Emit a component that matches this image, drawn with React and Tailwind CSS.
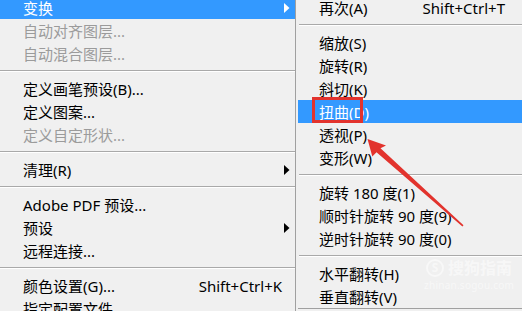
import React from "react";

const font = { fontFamily: '"Noto Sans", "Noto Sans CJK SC", sans-serif' };

function Arrow({ white }) {
  return (
    <svg width="6" height="10" viewBox="0 0 6 10" className="absolute right-[5px] top-1/2 -translate-y-1/2">
      <polygon points="0,0 5.5,5 0,10" fill={white ? "#ffffff" : "#000000"} />
    </svg>
  );
}

function Item({ label, shortcut, sub, disabled, active, pl = "pl-[23px]", pr = "pr-[13px]" }) {
  const color = active ? "bg-[#3399ff] text-white" : disabled ? "text-[#9b9b9b]" : "text-black";
  return (
    <div className={`relative h-[23px] flex items-center justify-between pt-px ${pl} ${pr} ${color}`}>
      <span className="whitespace-nowrap">{label}</span>
      {shortcut && <span className="whitespace-nowrap">{shortcut}</span>}
      {sub && <Arrow white={active} />}
    </div>
  );
}

function Sep({ ml = "ml-0" }) {
  return (
    <div className={`h-[12px] flex items-center ${ml}`}>
      <div className="w-full border-t border-[#a9a9a9] border-b border-b-white" />
    </div>
  );
}

export default function App() {
  return (
    <div className="relative w-[522px] h-[311px] overflow-hidden bg-[#f0f0f0] text-[15px] leading-none" style={font}>
      <div className="flex h-full">
        {/* main menu */}
        <div className="w-[295px] shrink-0 -mt-[4px]">
          <Item label="变换" sub active />
          <Item label="自动对齐图层..." disabled />
          <Item label="自动混合图层..." disabled />
          <Sep />
          <Item label="定义画笔预设(B)..." />
          <Item label="定义图案..." />
          <Item label="定义自定形状..." disabled />
          <Sep />
          <Item label="清理(R)" sub />
          <Sep />
          <Item label="Adobe PDF 预设..." />
          <Item label="预设" sub />
          <Item label="远程连接..." />
          <Sep />
          <Item label="颜色设置(G)..." shortcut="Shift+Ctrl+K" />
          <Item label="指定配置文件..." />
        </div>

        {/* transform submenu */}
        <div className="flex-1 border-l border-[#a0a0a0] pl-[2px] -mt-[4px]">
          <div className="h-[313px] border-b border-[#a0a0a0]">
            <Item label="再次(A)" shortcut="Shift+Ctrl+T" pl="pl-[21px]" pr="pr-[17px]" />
            <Sep ml="ml-px" />
            <Item label="缩放(S)" pl="pl-[21px]" />
            <Item label="旋转(R)" pl="pl-[21px]" />
            <Item label="斜切(K)" pl="pl-[21px]" />
            <Item label="扭曲(D)" active pl="pl-[21px]" />
            <Item label="透视(P)" pl="pl-[21px]" />
            <Item label="变形(W)" pl="pl-[21px]" />
            <Sep ml="ml-px" />
            <Item label="旋转 180 度(1)" pl="pl-[21px]" />
            <Item label="顺时针旋转 90 度(9)" pl="pl-[21px]" />
            <Item label="逆时针旋转 90 度(0)" pl="pl-[21px]" />
            <Sep ml="ml-px" />
            <Item label="水平翻转(H)" pl="pl-[21px]" />
            <Item label="垂直翻转(V)" pl="pl-[21px]" />
          </div>
        </div>
      </div>

      {/* watermark */}
      <div className="absolute left-[424px] top-[259px] flex flex-col items-center text-white/50 pointer-events-none">
        <div className="flex items-center gap-[4px] text-[16px] font-bold">
          <span className="w-[18px] h-[18px] rounded-full border-2 border-white/50 flex items-center justify-center text-[12px]">S</span>
          <span>搜狗指南</span>
        </div>
        <span className="text-[10px] mt-[3px] tracking-wide">zhinan.sogou.com</span>
      </div>

      {/* annotation: red box + arrow */}
      <div className="absolute left-[312px] top-[97px] w-[51px] h-[26px] border-[3px] border-[#e2332d] pointer-events-none" />
      <svg className="absolute inset-0 pointer-events-none" width="522" height="311" viewBox="0 0 522 311">
        <polygon
          points="367.5,139 386,145.5 380.5,148.3 463.5,225.3 462.4,226.5 376.5,152.2 372.3,156.5"
          fill="#e2332d"
        />
      </svg>
    </div>
  );
}
